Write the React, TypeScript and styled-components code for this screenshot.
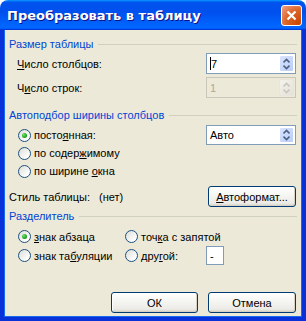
import styled, { createGlobalStyle } from "styled-components";

const GlobalStyle = createGlobalStyle`
  html, body {
    margin: 0;
    padding: 0;
    background: #ffffff;
  }
  * {
    box-sizing: border-box;
  }
`;

const Window = styled.div`
  width: 306px;
  height: 321px;
  display: flex;
  flex-direction: column;
  font-family: "Liberation Sans", Arial, sans-serif;
  font-size: 11px;
  color: #000;
`;

const TitleBar = styled.div`
  height: 30px;
  flex: none;
  display: flex;
  align-items: center;
  justify-content: space-between;
  padding: 0 4px 0 7px;
  border-radius: 8px 8px 0 0;
  background: linear-gradient(
    180deg,
    #0997ff,
    #0053ee 8%,
    #0050ee 40%,
    #06f 88%,
    #06f 93%,
    #005bff 95%,
    #003dd7 96%,
    #003dd7
  );
`;

const TitleText = styled.span`
  font-family: "DejaVu Sans", sans-serif;
  font-weight: bold;
  font-size: 13px;
  color: #fff;
  text-shadow: 1px 1px #0f1089;
  padding-top: 1px;
`;

const CloseButton = styled.div`
  width: 21px;
  height: 21px;
  border: 1px solid #fff;
  border-radius: 3px;
  background: radial-gradient(circle at 90% 90%, #cc4600 0%, #dc6527 55%, #e98762 80%, #f0a589 100%);
  display: flex;
  align-items: center;
  justify-content: center;
`;

const Frame = styled.div`
  flex: 1;
  display: flex;
  flex-direction: column;
  background: #ece9d8;
  border: 4px solid #0831d9;
  border-top: 0;
  box-shadow: inset 1px 0 #166aee, inset -1px 0 #166aee, inset 0 -1px #166aee;
  padding: 0 6px 4px 4px;
`;

const GroupHeader = styled.div<{ $top: number }>`
  height: 14px;
  margin-top: ${(p) => p.$top}px;
  display: flex;
  align-items: center;
  gap: 5px;
  color: #0046d5;
  padding-left: 1px;
  &::after {
    content: "";
    flex: 1;
    height: 1px;
    margin-right: -1px;
    background: #d0d0bf;
  }
`;

const FieldRow = styled.div<{ $top: number }>`
  height: 21px;
  margin-top: ${(p) => p.$top}px;
  display: flex;
  align-items: center;
  justify-content: space-between;
  padding-left: 9px;
`;

const Label = styled.span`
  white-space: nowrap;
`;

const Key = styled.u`
  text-decoration: underline;
  text-underline-offset: 1px;
`;

const SpinBox = styled.div<{ $disabled?: boolean; $h?: number }>`
  width: 90px;
  height: ${(p) => p.$h ?? 21}px;
  display: flex;
  border: 1px solid ${(p) => (p.$disabled ? "#c9c7ba" : "#7f9db9")};
  background: ${(p) => (p.$disabled ? "#ece9d8" : "#fff")};
  color: ${(p) => (p.$disabled ? "#aca899" : "#000")};
  padding: 1px;
`;

const SpinValue = styled.div`
  flex: 1;
  display: flex;
  align-items: center;
  padding-left: 2px;
`;

const Caret = styled.span`
  width: 1px;
  height: 13px;
  background: #000;
`;

const SpinButtons = styled.div<{ $disabled?: boolean }>`
  width: 15px;
  display: flex;
  align-items: center;
  justify-content: center;
  border-radius: 2px;
  border: 1px solid ${(p) => (p.$disabled ? "#e7e5dc" : "#ffffff")};
  background: ${(p) =>
    p.$disabled
      ? "linear-gradient(135deg, #f3f2ec, #e4e2d8)"
      : "linear-gradient(135deg, #d9e4fd, #b9cdf7)"};
`;

const RadioList = styled.div`
  margin-top: 4px;
  display: flex;
  flex-direction: column;
  padding-left: 10px;
`;

const RadioRow = styled.div`
  height: 18px;
  display: flex;
  align-items: center;
  justify-content: space-between;
`;

const RadioLabel = styled.label`
  display: flex;
  align-items: center;
  gap: 3px;
  white-space: nowrap;
`;

const RadioCircle = styled.span<{ $checked?: boolean }>`
  width: 13px;
  height: 13px;
  flex: none;
  border-radius: 50%;
  border: 1px solid #1c5180;
  background: linear-gradient(135deg, #dcdcd7 0%, #ffffff 80%);
  display: flex;
  align-items: center;
  justify-content: center;
  &::after {
    content: "";
    display: ${(p) => (p.$checked ? "block" : "none")};
    width: 5px;
    height: 5px;
    border-radius: 50%;
    background: radial-gradient(circle at 35% 35%, #72e46e, #21a121 60%, #0c8a08);
  }
`;

const StyleRow = styled.div`
  height: 21px;
  margin-top: 6px;
  display: flex;
  align-items: center;
  padding-left: 1px;
`;

const StyleLabel = styled.span`
  width: 90px;
`;

const StyleValue = styled.span`
  flex: 1;
`;

const Button = styled.button<{ $w?: number }>`
  width: ${(p) => p.$w ?? 88}px;
  height: 21px;
  padding: 0;
  font: inherit;
  color: #000;
  border: 1px solid #003c74;
  border-radius: 3px;
  background: linear-gradient(180deg, #ffffff 0%, #f6f6f3 40%, #ecebe6 85%, #d6d0c5 100%);
  box-shadow: inset -1px -1px #d6d0c5, inset 1px 1px #fff;
`;

const SepGrid = styled.div`
  margin-top: 4px;
  display: grid;
  grid-template-columns: 107px 81px 1fr;
  grid-auto-rows: 19px;
  align-items: center;
  padding-left: 10px;
`;

const Wide = styled.div`
  grid-column: 2 / 4;
`;

const SmallInput = styled.div`
  width: 18px;
  height: 19px;
  border: 1px solid #7f9db9;
  background: #fff;
  padding-left: 3px;
  display: flex;
  align-items: center;
`;

const Footer = styled.div`
  margin-top: auto;
  display: flex;
  justify-content: flex-end;
  gap: 10px;
`;

const SpinArrows = ({ disabled }: { disabled?: boolean }) => (
  <svg width="7" height="12" viewBox="0 0 7 12">
    <path
      d="M0.5 4.5 L3.5 1.5 L6.5 4.5 M0.5 7.5 L3.5 10.5 L6.5 7.5"
      fill="none"
      stroke={disabled ? "#c9c7ba" : "#4d6185"}
      strokeWidth="1.6"
    />
  </svg>
);

const Radio = ({ checked, children }: { checked?: boolean; children: React.ReactNode }) => (
  <RadioLabel>
    <RadioCircle $checked={checked} />
    <span>{children}</span>
  </RadioLabel>
);

export default function App() {
  return (
    <>
      <GlobalStyle />
      <Window>
        <TitleBar>
          <TitleText>Преобразовать в таблицу</TitleText>
          <CloseButton>
            <svg width="11" height="11" viewBox="0 0 11 11">
              <path d="M1.5 1.5 L9.5 9.5 M9.5 1.5 L1.5 9.5" stroke="#fff" strokeWidth="2.2" />
            </svg>
          </CloseButton>
        </TitleBar>
        <Frame>
          <GroupHeader $top={7}>Размер таблицы</GroupHeader>
          <FieldRow $top={2}>
            <Label>
              <Key>Ч</Key>исло столбцов:
            </Label>
            <SpinBox>
              <SpinValue>
                <Caret />7
              </SpinValue>
              <SpinButtons>
                <SpinArrows />
              </SpinButtons>
            </SpinBox>
          </FieldRow>
          <FieldRow $top={3}>
            <Label>
              Ч<Key>и</Key>сло строк:
            </Label>
            <SpinBox $disabled>
              <SpinValue>1</SpinValue>
              <SpinButtons $disabled>
                <SpinArrows disabled />
              </SpinButtons>
            </SpinBox>
          </FieldRow>

          <GroupHeader $top={10}>Автоподбор ширины столбцов</GroupHeader>
          <RadioList>
            <RadioRow>
              <Radio checked>
                посто<Key>я</Key>нная:
              </Radio>
              <SpinBox $h={20}>
                <SpinValue>Авто</SpinValue>
                <SpinButtons>
                  <SpinArrows />
                </SpinButtons>
              </SpinBox>
            </RadioRow>
            <RadioRow>
              <Radio>
                по содер<Key>ж</Key>имому
              </Radio>
            </RadioRow>
            <RadioRow>
              <Radio>
                по ширине <Key>о</Key>кна
              </Radio>
            </RadioRow>
          </RadioList>

          <StyleRow>
            <StyleLabel>Стиль таблицы:</StyleLabel>
            <StyleValue>(нет)</StyleValue>
            <Button type="button">
              <Key>А</Key>втоформат...
            </Button>
          </StyleRow>

          <GroupHeader $top={2}>Разделитель</GroupHeader>
          <SepGrid>
            <Radio checked>
              <Key>з</Key>нак абзаца
            </Radio>
            <Wide>
              <Radio>
                точ<Key>к</Key>а с запятой
              </Radio>
            </Wide>
            <Radio>
              знак та<Key>б</Key>уляции
            </Radio>
            <Radio>
              дру<Key>г</Key>ой:
            </Radio>
            <SmallInput>-</SmallInput>
          </SepGrid>

          <Footer>
            <Button type="button" $w={87}>
              ОК
            </Button>
            <Button type="button" $w={88}>
              Отмена
            </Button>
          </Footer>
        </Frame>
      </Window>
    </>
  );
}
